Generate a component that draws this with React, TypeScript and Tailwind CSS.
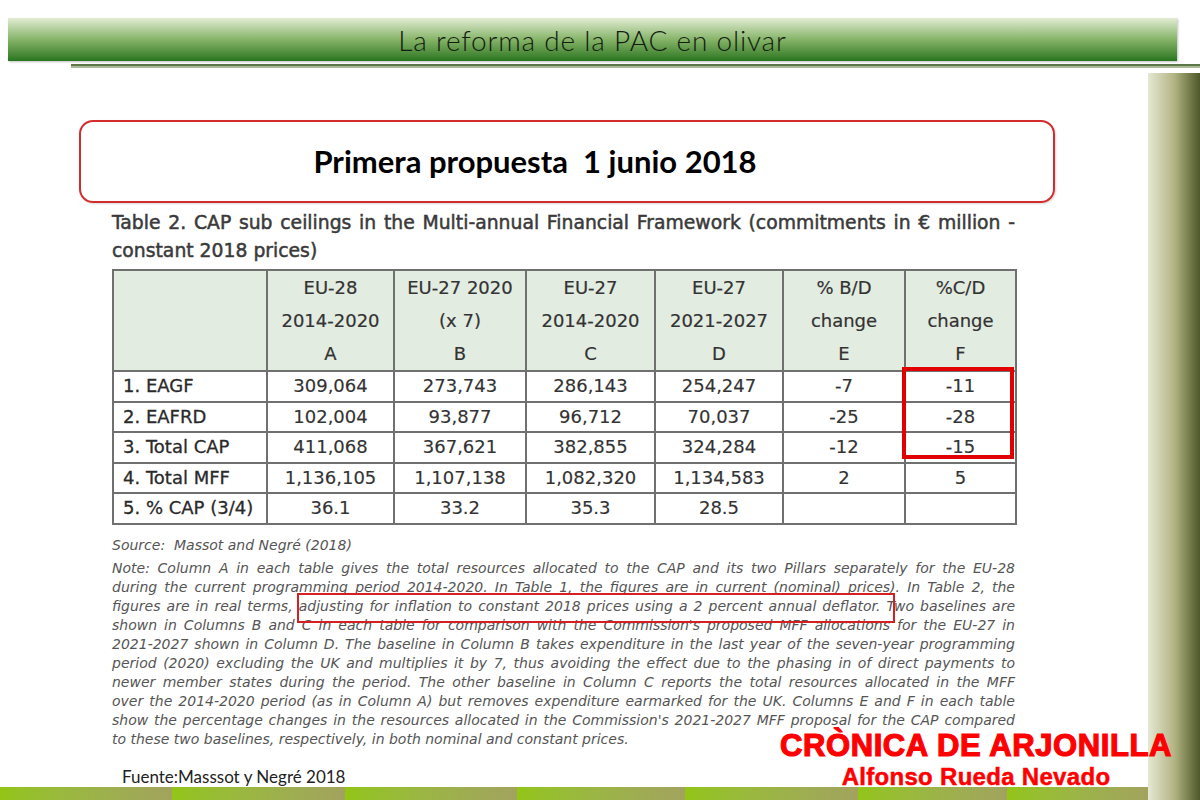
import React from 'react';

const noteLines = [
  'Note: Column A in each table gives the total resources allocated to the CAP and its two Pillars separately for the EU-28',
  'during the current programming period 2014-2020. In Table 1, the figures are in current (nominal) prices). In Table 2, the',
  'figures are in real terms, adjusting for inflation to constant 2018 prices using a 2 percent annual deflator. Two baselines are',
  "shown in Columns B and C in each table for comparison with the Commission's proposed MFF allocations for the EU-27 in",
  '2021-2027 shown in Column D. The baseline in Column B takes expenditure in the last year of the seven-year programming',
  'period (2020) excluding the UK and multiplies it by 7, thus avoiding the effect due to the phasing in of direct payments to',
  'newer member states during the period. The other baseline in Column C reports the total resources allocated in the MFF',
  'over the 2014-2020 period (as in Column A) but removes expenditure earmarked for the UK.  Columns E and F in each table',
  "show the percentage changes in the resources allocated in the Commission's 2021-2027 MFF proposal for the CAP compared",
  'to these two baselines, respectively, in both nominal and constant prices.',
];

const headers = [
  ['', '', ''],
  ['EU-28', '2014-2020', 'A'],
  ['EU-27 2020', '(x 7)', 'B'],
  ['EU-27', '2014-2020', 'C'],
  ['EU-27', '2021-2027', 'D'],
  ['% B/D', 'change', 'E'],
  ['%C/D', 'change', 'F'],
];

const rows = [
  ['1. EAGF', '309,064', '273,743', '286,143', '254,247', '-7', '-11'],
  ['2. EAFRD', '102,004', '93,877', '96,712', '70,037', '-25', '-28'],
  ['3. Total CAP', '411,068', '367,621', '382,855', '324,284', '-12', '-15'],
  ['4. Total MFF', '1,136,105', '1,107,138', '1,082,320', '1,134,583', '2', '5'],
  ['5. % CAP (3/4)', '36.1', '33.2', '35.3', '28.5', '', ''],
];

const colWidths = [154, 127, 132, 129, 128, 122, 111];

export default function App() {
  return (
    <div className="relative w-[1200px] h-[800px] overflow-hidden bg-white">
      {/* Header bar */}
      <div className="pt-[18px]">
        <div className="ml-[8px] w-[1169px] h-[43px] flex items-center justify-center bg-gradient-to-b from-[#e2ecd4] via-[#86b468] to-[#28761f] shadow-[1px_1px_2px_rgba(0,0,0,0.25)]">
          <span className="font-['Lato',sans-serif] font-light text-[28px] tracking-[0.8px] text-[#141c12] leading-none">
            La reforma de la PAC en olivar
          </span>
        </div>
        <div className="ml-[71px] mt-[3px]">
          <div className="h-[2px] bg-[#5d7747]" />
          <div className="h-[2px] bg-[#a9bb98]" />
        </div>
      </div>

      <div className="flex">
        {/* Main column */}
        <div className="w-[1148px] h-[732px] flex flex-col">
          <div className="flex-1">
            {/* Title box */}
            <div className="ml-[79px] mt-[52px] w-[976px] h-[83px] rounded-[14px] border-2 border-[#d42c2c] flex items-center justify-center pr-[64px] shadow-[1px_1px_2px_rgba(0,0,0,0.15)]">
              <span className="whitespace-pre font-['Lato',sans-serif] font-bold text-[31px] text-black">
                Primera propuesta  1 junio 2018
              </span>
            </div>

            <div className="ml-[112px] w-[903px] font-['DejaVu_Sans',sans-serif]">
              {/* Caption */}
              <div className="mt-[6px] text-[18.8px] leading-[28px] text-[#3a3a3a] [-webkit-text-stroke:0.5px_#3a3a3a]">
                <div className="whitespace-nowrap [text-align-last:justify] text-justify">
                  Table 2. CAP sub ceilings in the Multi-annual Financial Framework (commitments in € million -
                </div>
                <div>constant 2018 prices)</div>
              </div>

              {/* Table */}
              <div className="relative mt-[4px]">
                <table className="table-fixed border-collapse w-[903px] text-[18px] text-[#333]">
                  <colgroup>
                    {colWidths.map((w, i) => (
                      <col key={i} style={{ width: w }} />
                    ))}
                  </colgroup>
                  <thead>
                    <tr className="h-[98px] bg-[#e3ece1]">
                      {headers.map((h, i) => (
                        <th key={i} className="border-2 border-[#707070] font-normal text-center leading-[33px] p-0 [-webkit-text-stroke:0.2px_#333]">
                          {h.map((l, j) => (
                            <div key={j}>{l || '\u00a0'}</div>
                          ))}
                        </th>
                      ))}
                    </tr>
                  </thead>
                  <tbody>
                    {rows.map((r, i) => (
                      <tr key={i} className="h-[30.5px]">
                        {r.map((c, j) => (
                          <td
                            key={j}
                            className={`border-2 border-[#707070] leading-[26px] p-0 ${
                              j === 0 ? 'text-left pl-[9px] text-[#2a2a2a] [-webkit-text-stroke:0.3px_#2a2a2a]' : 'text-center [-webkit-text-stroke:0.15px_#333]'
                            }`}
                          >
                            {c}
                          </td>
                        ))}
                      </tr>
                    ))}
                  </tbody>
                </table>
                <div className="absolute left-[790px] top-[98px] w-[112px] h-[92px] border-[4px] border-[#e00000]" />
              </div>

              {/* Source + note */}
              <div className="mt-[10px] italic text-[14px] text-[#555]">
                <div className="leading-[20px]">Source:&nbsp; Massot and Negré (2018)</div>
                <div className="relative mt-[4px] leading-[19.1px]">
                  {noteLines.map((l, i) => (
                    <div
                      key={i}
                      className={`whitespace-nowrap ${i < noteLines.length - 1 ? 'text-justify [text-align-last:justify]' : ''}`}
                    >
                      {l}
                    </div>
                  ))}
                  <div className="absolute left-[185px] top-[34px] w-[598px] h-[30px] border-2 border-[#d42020]" />
                </div>
              </div>
            </div>

            <div className="ml-[122px] mt-[18px] font-['Lato',sans-serif] text-[17px] text-[#222] leading-[20px]">
              Fuente:Masssot y Negré 2018
            </div>
          </div>

          {/* Bottom bar */}
          <div className="h-[14px] flex">
            {[172, 173, 172, 168, 173, 149, 141].map((w, i) => (
              <div key={i} className="h-full bg-gradient-to-r from-[#93c514] to-[#a2a35e]" style={{ width: w }} />
            ))}
          </div>
        </div>

        {/* Right side bar */}
        <div className="mt-[5px] w-[52px] h-[727px] bg-gradient-to-r from-[#e6e8d4] via-[#b4b584] to-[#4e5828]" />
      </div>

      {/* Watermark */}
      <div className="absolute left-[777px] top-[731px] w-[398px] flex flex-col items-center text-[#ff0000] font-['Liberation_Sans',Arial,sans-serif] font-bold">
        <div className="text-[31px] leading-[30px] tracking-[0.6px] [-webkit-text-stroke:1.2px_#ff0000]">CRÒNICA DE ARJONILLA</div>
        <div className="text-[24px] leading-[22px] mt-[5px] tracking-[0.3px] [-webkit-text-stroke:0.5px_#ff0000]">Alfonso Rueda Nevado</div>
      </div>
    </div>
  );
}
